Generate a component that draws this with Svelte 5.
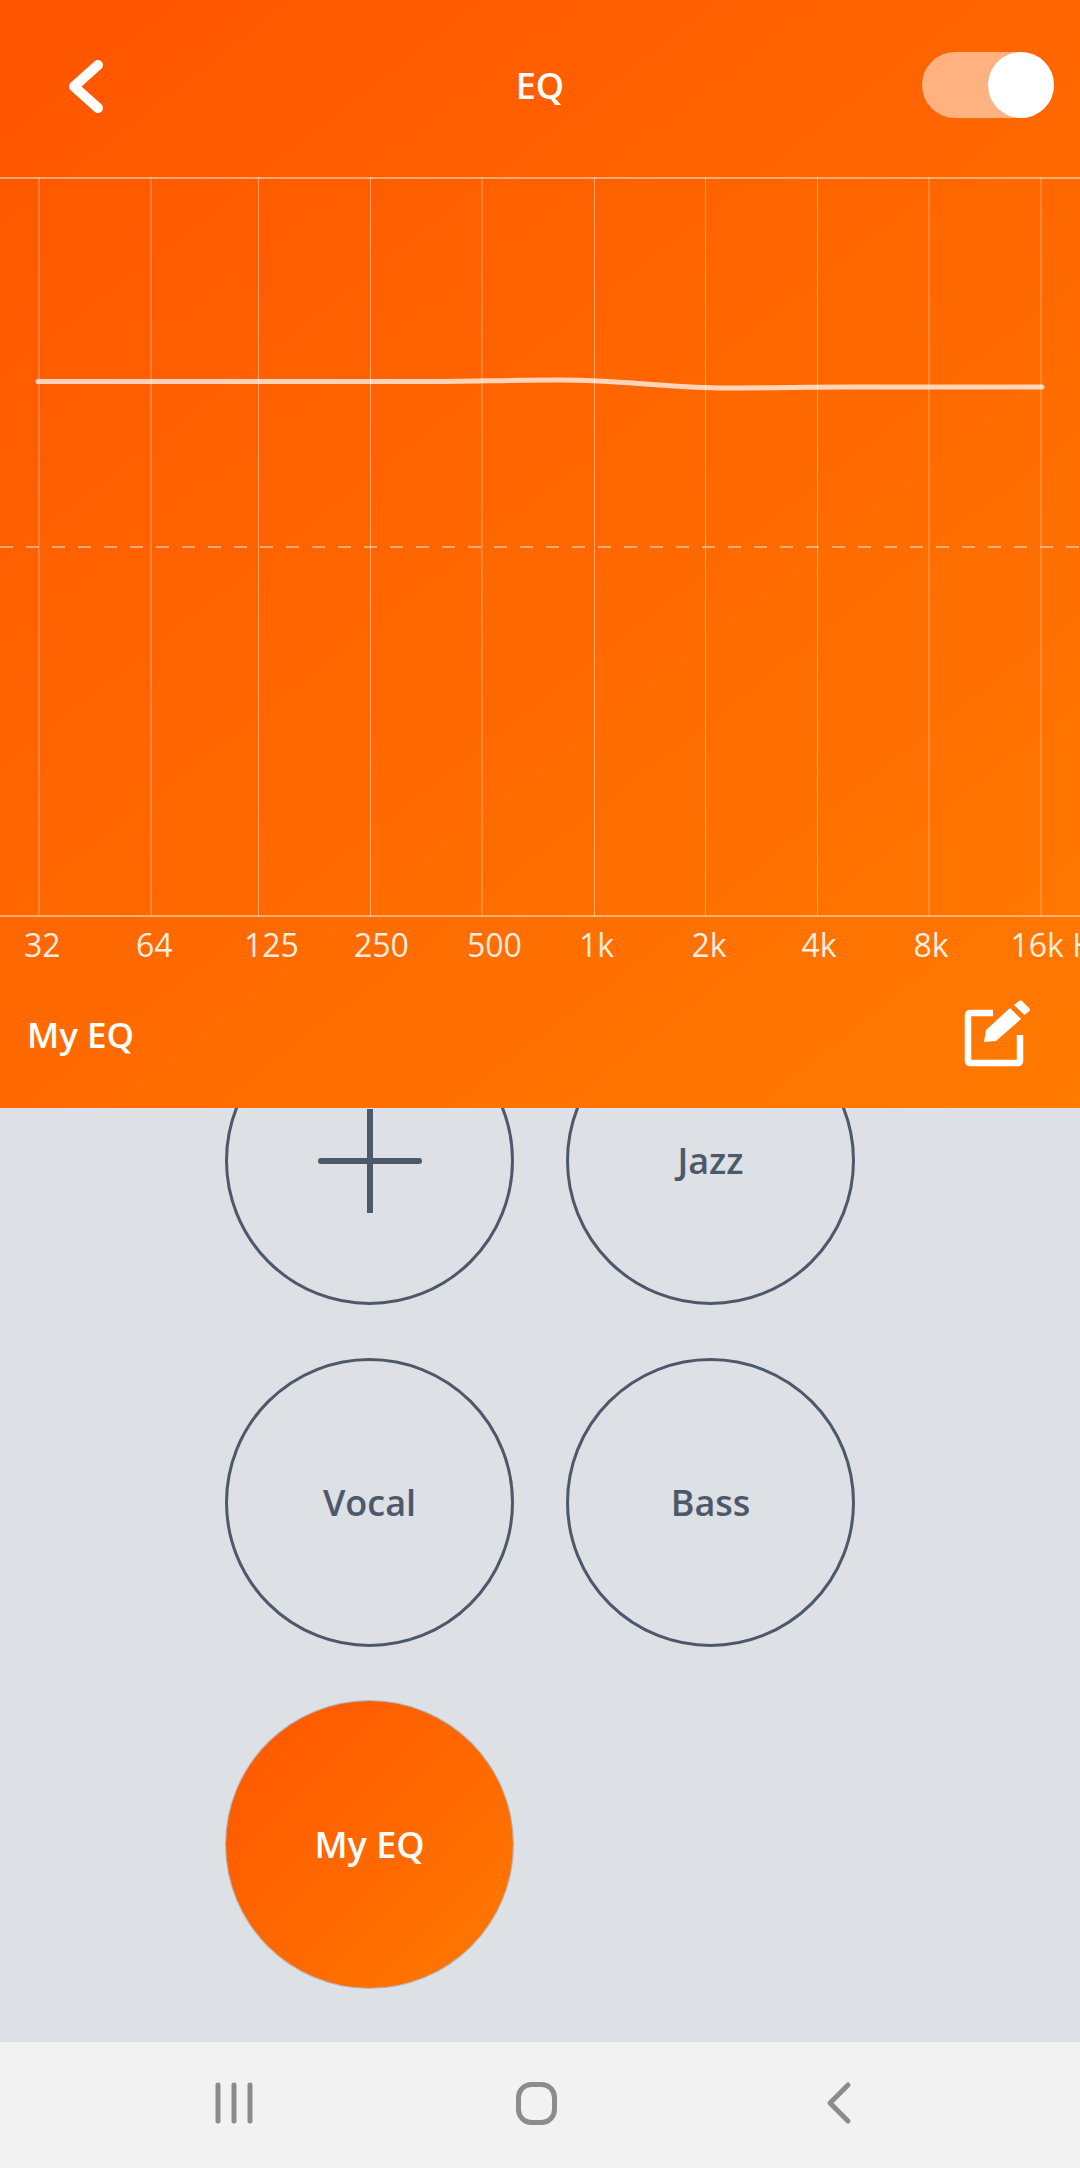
<script>
  // EQ screen: gradient panel with the response chart, preset circles below.
  const gridX = [39, 151, 258.5, 370.5, 482, 594.5, 705.5, 817.5, 929, 1041];
  const bands = [
    { label: '32', width: 112 },
    { label: '64', width: 108 },
    { label: '125', width: 110 },
    { label: '250', width: 113 },
    { label: '500', width: 112 },
    { label: '1k', width: 112.5 },
    { label: '2k', width: 110 },
    { label: '4k', width: 112 },
    { label: '8k', width: 97 },
    { label: '16k Hz', width: 100 }
  ];
  const presets = ['Jazz', 'Vocal', 'Bass'];
</script>

<div class="screen">
  <section class="panel">
    <header class="bar">
      <svg class="back" viewBox="0 0 44 60" width="44" height="60" aria-hidden="true">
        <path d="M34 9 L10 30.5 L34 52" />
      </svg>
      <h1>EQ</h1>
      <div class="toggle"><span class="knob"></span></div>
    </header>

    <svg class="chart" viewBox="0 0 1080 741" width="1080" height="741" aria-hidden="true">
      {#each gridX as x}
        <line class="grid" x1={x} y1="0" x2={x} y2="739" />
      {/each}
      <line class="edge" x1="0" y1="1" x2="1080" y2="1" />
      <line class="edge" x1="0" y1="739" x2="1080" y2="739" />
      <line class="dash" x1="0" y1="370" x2="1080" y2="370" />
      <path class="curve" d="M38 204.5 L420 204.5 C470 204.5 510 203 560 203 C620 203 660 210 720 211 C780 211 800 210 850 210 L1042 210" />
    </svg>

    <div class="bands">
      {#each bands as band}
        <span style="width: {band.width}px">{band.label}</span>
      {/each}
    </div>

    <div class="current">
      <span>My EQ</span>
      <svg viewBox="0 0 70 70" width="70" height="70" aria-hidden="true">
        <path class="box" d="M31 13 H8.5 Q6 13 6 15.5 V60.5 Q6 63 8.5 63 H55.5 Q58 63 58 60.5 V35" />
        <path class="pencil" d="M22 42 L24 30 L48 8 L59 19 L34 41 Z" />
        <path class="pencil" d="M52 5 L57 1 Q58.7 0 60 1 L67.5 8.5 Q68.5 10 67.5 11 L62.5 15 Z" />
      </svg>
    </div>
  </section>

  <main class="presets">
    <div class="circle">
      <svg viewBox="0 0 104 104" width="104" height="104" aria-hidden="true">
        <path d="M3 52 H101 M52 0 V104" />
      </svg>
    </div>
    {#each presets as name}
      <div class="circle">{name}</div>
    {/each}
    <div class="circle active">My EQ</div>
  </main>

  <nav class="softkeys">
    <svg viewBox="0 0 44 44" width="44" height="44" aria-hidden="true">
      <path d="M5 4 V40 M21 4 V40 M37 4 V40" />
    </svg>
    <svg viewBox="0 0 44 44" width="44" height="44" aria-hidden="true">
      <rect x="4.5" y="3.5" width="36" height="38" rx="13" />
    </svg>
    <svg viewBox="0 0 44 44" width="44" height="44" aria-hidden="true">
      <path d="M33 4 L15 22 L33 40" />
    </svg>
  </nav>
</div>

<style>
  :global(body) {
    margin: 0;
    background: #dde0e5;
  }
  .screen {
    width: 1080px;
    height: 2168px;
    display: flex;
    flex-direction: column;
    overflow: hidden;
    font-family: "Open Sans", "Noto Sans", sans-serif;
  }

  .panel {
    height: 1108px;
    flex: none;
    position: relative;
    z-index: 1;
    color: #fff;
    background: linear-gradient(142deg, #ff5500, #ff7a00);
  }
  .bar {
    height: 177px;
    display: flex;
    align-items: flex-start;
    justify-content: space-between;
    position: relative;
  }
  .back {
    margin: 56px 0 0 64px;
  }
  .back path {
    fill: none;
    stroke: #fff;
    stroke-width: 10;
    stroke-linecap: round;
    stroke-linejoin: round;
  }
  .bar h1 {
    position: absolute;
    left: 0;
    right: 0;
    top: 61px;
    margin: 0;
    text-align: center;
    font-size: 36px;
    line-height: 50px;
    font-weight: 600;
  }
  .toggle {
    width: 132px;
    height: 66px;
    margin: 52px 26px 0 0;
    border-radius: 33px;
    background: rgba(255, 255, 255, 0.5);
    display: flex;
    justify-content: flex-end;
  }
  .knob {
    width: 66px;
    height: 66px;
    border-radius: 50%;
    background: #fff;
  }

  .chart {
    display: block;
  }
  .grid {
    stroke: rgba(255, 255, 255, 0.4);
    stroke-width: 1;
  }
  .edge {
    stroke: rgba(255, 255, 255, 0.45);
    stroke-width: 2;
  }
  .dash {
    stroke: rgba(255, 255, 255, 0.45);
    stroke-width: 2;
    stroke-dasharray: 13 13;
  }
  .curve {
    fill: none;
    stroke: rgba(255, 255, 255, 0.72);
    stroke-width: 5;
    stroke-linecap: round;
  }

  .bands {
    display: flex;
    padding: 5px 0 0 24px;
    font-size: 32px;
    line-height: 44px;
    white-space: nowrap;
    color: rgba(255, 255, 255, 0.9);
  }
  .bands span {
    flex: none;
  }

  .current {
    display: flex;
    align-items: center;
    justify-content: space-between;
    padding: 33px 48px 0 27px;
    font-size: 35px;
    line-height: 50px;
    font-weight: 600;
  }
  .box {
    fill: none;
    stroke: #fff;
    stroke-width: 6.5;
  }
  .pencil {
    fill: #fff;
  }

  .presets {
    flex: 1;
    min-height: 0;
    overflow: hidden;
    display: grid;
    grid-template-columns: 289px 289px;
    grid-auto-rows: 289px;
    gap: 53px 52px;
    justify-content: center;
    margin-top: -92px;
    font-size: 36px;
    font-weight: 600;
    color: #4d586a;
  }
  .circle {
    box-sizing: border-box;
    border: 3.5px solid #4d586a;
    border-radius: 50%;
    display: flex;
    align-items: center;
    justify-content: center;
  }
  .circle svg path {
    fill: none;
    stroke: #4d586a;
    stroke-width: 6;
    stroke-linecap: round;
  }
  .circle.active {
    border: 1px solid rgba(77, 88, 106, 0.3);
    background-clip: padding-box;
    color: #fff;
    background-image: linear-gradient(135deg, #ff5500, #ff7a00);
  }

  .softkeys {
    box-sizing: border-box;
    height: 126px;
    flex: none;
    background: #f2f2f2;
    display: flex;
    align-items: center;
    justify-content: space-between;
    padding: 0 221px 4px 213px;
  }
  .softkeys path,
  .softkeys rect {
    fill: none;
    stroke: #8c8c8c;
    stroke-width: 5;
    stroke-linecap: round;
    stroke-linejoin: round;
  }
</style>
